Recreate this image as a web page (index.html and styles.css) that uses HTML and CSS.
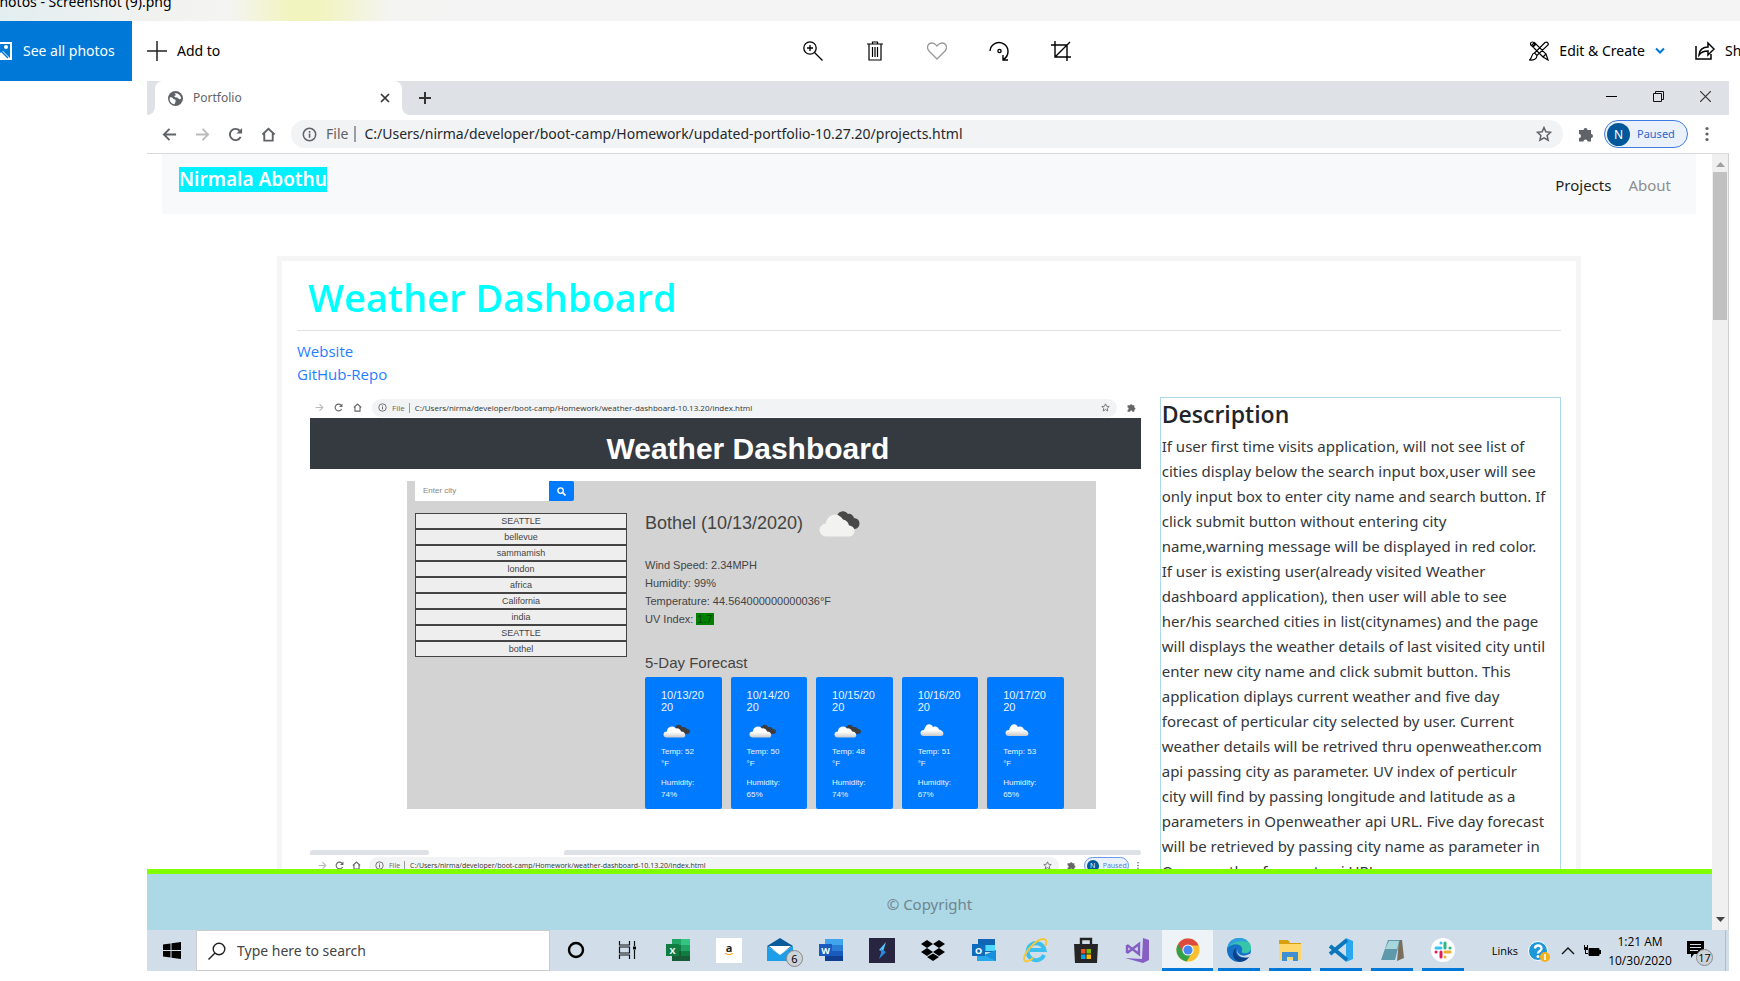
FILE: index.html
```html
<!DOCTYPE html>
<html lang="en">
<head>
<meta charset="utf-8">
<title>Photos - Screenshot (9).png</title>
<link rel="stylesheet" href="styles.css">
</head>
<body>
<svg class="defs" aria-hidden="true">
  <symbol id="i-back" viewBox="0 0 16 16"><path d="M15 8H2M8 2L2 8l6 6" fill="none" stroke="currentColor" stroke-width="2"/></symbol>
  <symbol id="i-fwd" viewBox="0 0 16 16"><path d="M1 8h13M8 2l6 6-6 6" fill="none" stroke="currentColor" stroke-width="2"/></symbol>
  <symbol id="i-reload" viewBox="0 0 16 16"><path d="M13.5 10.5A6 6 0 1 1 12.5 4" fill="none" stroke="currentColor" stroke-width="2"/><path d="M15 1v6H9z" fill="currentColor"/></symbol>
  <symbol id="i-home" viewBox="0 0 16 16"><path d="M1.5 8L8 2l6.500 6M3.500 7v7.500h9V7" fill="none" stroke="currentColor" stroke-width="2"/></symbol>
  <symbol id="i-info" viewBox="0 0 16 16"><circle cx="8" cy="8" r="6.600" fill="none" stroke="currentColor" stroke-width="1.600"/><path d="M7.200 7h1.700v4.500H7.200zM7.200 4.300h1.700V6H7.200z" fill="currentColor"/></symbol>
  <symbol id="i-star" viewBox="0 0 16 16"><path d="M8 1.500l1.900 4.300 4.700.5-3.500 3.200 1 4.700L8 11.800l-4.100 2.400 1-4.700L1.400 6.300l4.700-.5z" fill="none" stroke="currentColor" stroke-width="1.500"/></symbol>
  <symbol id="i-puzzle" viewBox="0 0 16 16"><path d="M1 4h4.500a2 2 0 1 1 4 0H13v4a2 2 0 1 1 0 4v3.500H9.500a2 2 0 0 0-4 0H1V12a2 2 0 0 0 0-4z" fill="currentColor"/></symbol>
  <symbol id="i-dots" viewBox="0 0 4 16"><circle cx="2" cy="2.500" r="1.600"/><circle cx="2" cy="8" r="1.600"/><circle cx="2" cy="13.500" r="1.600"/></symbol>
  <linearGradient id="g-cloud" x1="0" y1="0" x2="0" y2="1"><stop offset=".5" stop-color="#fff"/><stop offset="1" stop-color="#c9c9c9"/></linearGradient>
  <symbol id="i-cloud" viewBox="0 0 28 14"><path d="M4 12a3.500 3 0 0 1 0-6C6-1 11-1 13 3c3-1 5 0 6 2.500 5 1 6 6.500 2 6.500z" fill="url(#g-cloud)"/></symbol>
  <symbol id="i-clouds" viewBox="0 0 28 14"><path d="M12 4c1-4 6-4 7-1 4-.5 5 2 5 2 4 0 4 5 0 5h-8z" fill="#3d3d3f"/><path d="M4 13.500a3.500 3 0 0 1 0-6 5 5 0 0 1 9-3 4 4 0 0 1 5 3 4 3.500 0 0 1 3 6z" fill="url(#g-cloud)"/></symbol>
</svg>

<div class="titlebar"><span class="titlebar-text">Photos - Screenshot (9).png</span></div>

<header class="toolbar">
  <div class="tools-left">
    <button class="see-all"><svg class="see-icon" viewBox="0 0 20 18"><path d="M0 1h19v16H0" fill="none" stroke="#fff" stroke-width="2"/><circle cx="14" cy="5" r="2" fill="#fff"/><path d="M0 4l5 4 3 3 3-2 7 7H0z" fill="#fff"/><path d="M8 8l8 8" stroke="#0078d7" stroke-width="1.500"/></svg>See all photos</button>
    <button class="tool-text"><svg width="20" height="20" viewBox="0 0 20 20"><path d="M0 10h20M10 0v20" stroke="#222" stroke-width="1.500"/></svg>Add to</button>
  </div>
  <div class="tools-mid">
    <button class="tool" aria-label="Zoom"><svg width="20" height="20" viewBox="0 0 20 20"><g fill="none" stroke="#000" stroke-width="1.300"><circle cx="7" cy="7" r="6.200"/><path d="M11.500 11.500l8 8M7 4v6M4 7h6"/></g></svg></button>
    <button class="tool" aria-label="Delete"><svg width="20" height="20" viewBox="0 0 20 20"><path d="M2 3h16M7.500 3V1h5v2M4 3v16h12V3M7.500 6v10M10 6v10M12.500 6v10" fill="none" stroke="#000" stroke-width="1.200"/></svg></button>
    <button class="tool" aria-label="Favorite"><svg width="20" height="20" viewBox="0 0 20 20"><path d="M10 18L2 10C-1 6 1 2 5 2c3 0 4 2 5 3 1-1 2-3 5-3 4 0 6 4 3 8z" fill="none" stroke="#999" stroke-width="1.300"/></svg></button>
    <button class="tool" aria-label="Rotate"><svg width="20" height="20" viewBox="0 0 20 20"><g fill="none" stroke="#000" stroke-width="1.400"><path d="M1 10a9 9 0 1 1 13.500 8.300M14 14v5h5"/><circle cx="10.500" cy="10" r="1.600"/></g></svg></button>
    <button class="tool" aria-label="Crop"><svg width="20" height="20" viewBox="0 0 20 20"><path d="M0 4h16v16M4 0v16h16M4 16L19 1" fill="none" stroke="#000" stroke-width="1.400"/></svg></button>
  </div>
  <div class="tools-right">
    <button class="tool-text"><svg width="20" height="20" viewBox="0 0 20 20"><g fill="none" stroke="#000" stroke-width="1.200"><path d="M5.500 1.500l-3 3L14 16l5 3-2-6zM14 16l3-3M4 6l3-3M16 1.500a2 2 0 0 1 3 2.500L8 14.500 5.500 12zM5.500 12C2 12.500 3.500 17 .5 19c4 .5 7.500-1 7.500-4.500"/><circle cx="3.500" cy="3" r="2"/></g></svg>Edit &amp; Create<svg class="chev" viewBox="0 0 10 8"><path d="M1 1.500l4 4 4-4" fill="none" stroke="#0078d7" stroke-width="2"/></svg></button>
    <button class="tool-text share"><svg width="20" height="20" viewBox="0 0 20 20"><path d="M1 5v13h15v-5M4 14c0-5 4-8 9-8V2l6 6-6 6v-4c-4 0-7 1-9 4z" fill="none" stroke="#000" stroke-width="1.500"/></svg>Share</button>
  </div>
</header>

<div class="browser">
  <div class="tabstrip">
    <div class="tab-edge"></div>
    <div class="tab-slot">
      <div class="tab"><svg width="15" height="15" viewBox="0 0 16 16"><circle cx="8" cy="8" r="8" fill="#5f6368"/><path d="M2 7c3-1 3 2 5 2s1 3 0 5C3 14 1 10 2 7zM7 2c4 0 7 3 7 6-2 2-3 0-4-1-2 0-4-1-3-2 1 0 2-1 0-3z" fill="#fff"/></svg><span>Portfolio</span><button class="plain" aria-label="Close tab"><svg width="10" height="10" viewBox="0 0 10 10"><path d="M1 1l8 8M9 1L1 9" stroke="#333" stroke-width="1.700"/></svg></button></div>
    </div>
    <div class="strip-rest">
      <button class="plain" aria-label="New tab"><svg width="12" height="12" viewBox="0 0 12 12"><path d="M0 6h12M6 0v12" stroke="#333" stroke-width="2"/></svg></button>
      <div class="win-controls">
        <button class="plain" aria-label="Minimize"><svg width="11" height="11" viewBox="0 0 11 11"><path d="M0 5.500h11" stroke="#000"/></svg></button>
        <button class="plain" aria-label="Restore"><svg width="11" height="11" viewBox="0 0 11 11"><path d="M.5 2.500h8v8h-8zM2.500 2V.5h8v8H9" fill="none" stroke="#111"/></svg></button>
        <button class="plain" aria-label="Close"><svg width="11" height="11" viewBox="0 0 11 11"><path d="M0 0l11 11M11 0L0 11" stroke="#333" stroke-width="1.200"/></svg></button>
      </div>
    </div>
  </div>

  <div class="addressbar">
    <button class="plain nav-ic" aria-label="Back"><svg><use href="#i-back"/></svg></button>
    <button class="plain nav-ic dim" aria-label="Forward"><svg><use href="#i-fwd"/></svg></button>
    <button class="plain nav-ic" aria-label="Reload"><svg><use href="#i-reload"/></svg></button>
    <button class="plain nav-ic" aria-label="Home"><svg><use href="#i-home"/></svg></button>
    <div class="omnibox">
      <svg class="om-ic"><use href="#i-info"/></svg><label class="om-file" for="url">File</label>
      <input id="url" class="om-url" type="text" value="C:/Users/nirma/developer/boot-camp/Homework/updated-portfolio-10.27.20/projects.html">
      <svg class="om-star"><use href="#i-star"/></svg>
    </div>
    <svg class="puzzle"><use href="#i-puzzle"/></svg>
    <button class="paused"><span class="avatar">N</span>Paused</button>
    <svg class="dots"><use href="#i-dots"/></svg>
  </div>

  <div class="viewport">
    <div class="page">
      <div class="page-scroll">
        <nav class="navbar">
          <a class="brand" href="#">Nirmala Abothu</a>
          <div class="nav-links"><a class="active" href="#">Projects</a><a href="#">About</a></div>
        </nav>
        <main class="card">
          <h1>Weather Dashboard</h1>
          <div class="links"><a href="#">Website</a><a href="#">GitHub-Repo</a></div>
          <div class="row">
            <div class="shots">
              <div class="shot">
                <div class="mini-bar">
                  <svg class="mini-ic dim"><use href="#i-fwd"/></svg><svg class="mini-ic"><use href="#i-reload"/></svg><svg class="mini-ic"><use href="#i-home"/></svg>
                  <div class="mini-omni"><svg class="mini-ic"><use href="#i-info"/></svg><span class="mini-file">File</span><span class="mini-url">C:/Users/nirma/developer/boot-camp/Homework/weather-dashboard-10.13.20/index.html</span><svg class="mini-ic"><use href="#i-star"/></svg></div>
                  <svg class="mini-ic"><use href="#i-puzzle"/></svg>
                </div>
                <div class="wd-head">Weather Dashboard</div>
                <div class="wd-body">
                  <div class="wd-side">
                    <div class="wd-search"><input type="text" placeholder="Enter city" aria-label="Enter city"><button aria-label="Search"><svg width="9" height="9" viewBox="0 0 10 10"><circle cx="4" cy="4" r="3" fill="none" stroke="#fff" stroke-width="1.500"/><path d="M6 6l3.500 3.500" stroke="#fff" stroke-width="1.800"/></svg></button></div>
                    <ul class="wd-list"><li>SEATTLE</li><li>bellevue</li><li>sammamish</li><li>london</li><li>africa</li><li>California</li><li>india</li><li>SEATTLE</li><li>bothel</li></ul>
                  </div>
                  <div class="wd-main">
                    <div class="wd-city">Bothel (10/13/2020)<svg width="42" height="28" viewBox="0 0 42 28"><path d="M18 8a6 6 0 0 1 11-3 5 5 0 0 1 6 4 5.500 5.500 0 1 1 0 11z" fill="#484848"/><path d="M7 27.500a6.500 6.500 0 0 1 0-13 9 9 0 0 1 17-4 8 8 0 0 1 6 6 5.500 5.500 0 0 1 0 11z" fill="#f2f2f0"/></svg></div>
                    <div class="wd-facts"><div>Wind Speed: 2.34MPH</div><div>Humidity: 99%</div><div>Temperature: 44.564000000000036°F</div><div>UV Index: <span class="uv">1.7</span></div></div>
                    <div class="wd-sub">5-Day Forecast</div>
                    <div class="wd-days">
                      <div class="day"><b>10/13/20<br>20</b><svg><use href="#i-clouds"/></svg><p>Temp: 52<br>°F</p><p>Humidity:<br>74%</p></div>
                      <div class="day"><b>10/14/20<br>20</b><svg><use href="#i-clouds"/></svg><p>Temp: 50<br>°F</p><p>Humidity:<br>65%</p></div>
                      <div class="day"><b>10/15/20<br>20</b><svg><use href="#i-clouds"/></svg><p>Temp: 48<br>°F</p><p>Humidity:<br>74%</p></div>
                      <div class="day"><b>10/16/20<br>20</b><svg><use href="#i-cloud"/></svg><p>Temp: 51<br>°F</p><p>Humidity:<br>67%</p></div>
                      <div class="day"><b>10/17/20<br>20</b><svg><use href="#i-cloud"/></svg><p>Temp: 53<br>°F</p><p>Humidity:<br>65%</p></div>
                    </div>
                  </div>
                </div>
              </div>
              <div class="shot">
                <div class="mini-strip"><i></i><i></i></div>
                <div class="mini-bar second">
                  <svg class="mini-ic dim"><use href="#i-fwd"/></svg><svg class="mini-ic"><use href="#i-reload"/></svg><svg class="mini-ic"><use href="#i-home"/></svg>
                  <div class="mini-omni"><svg class="mini-ic"><use href="#i-info"/></svg><span class="mini-file">File</span><span class="mini-url">C:/Users/nirma/developer/boot-camp/Homework/weather-dashboard-10.13.20/index.html</span><svg class="mini-ic"><use href="#i-star"/></svg></div>
                  <svg class="mini-ic"><use href="#i-puzzle"/></svg>
                  <span class="mini-paused"><span class="mini-av">N</span>Paused</span>
                  <svg class="mini-dots"><use href="#i-dots"/></svg>
                </div>
              </div>
            </div>
            <section class="desc">
              <h2>Description</h2>
              <p>If user first time visits application, will not see list of<br>cities display below the search input box,user will see<br>only input box to enter city name and search button. If<br>click submit button without entering city<br>name,warning message will be displayed in red color.<br>If user is existing user(already visited Weather<br>dashboard application), then user will able to see<br>her/his searched cities in list(citynames) and the page<br>will displays the weather details of last visited city until<br>enter new city name and click submit button. This<br>application diplays current weather and five day<br>forecast of perticular city selected by user. Current<br>weather details will be retrived thru openweather.com<br>api passing city as parameter. UV index of perticulr<br>city will find by passing longitude and latitude as a<br>parameters in Openweather api URL. Five day forecast<br>will be retrieved by passing city name as parameter in<br>Openweather forecast api URL.</p>
            </section>
          </div>
        </main>
      </div>
      <footer class="footer">© Copyright</footer>
    </div>
    <div class="scrollbar">
      <svg width="9" height="5" viewBox="0 0 9 5"><path d="M0 5L4.500 0 9 5z" fill="#a0a0a0"/></svg>
      <div class="thumb"></div>
      <svg class="down" width="9" height="5" viewBox="0 0 9 5"><path d="M0 0l4.500 5L9 0z" fill="#444"/></svg>
    </div>
  </div>

  <div class="taskbar">
    <button class="start" aria-label="Start"><svg width="18" height="17" viewBox="0 0 18 17"><path d="M0 2.500L7.500 1.500V8H0zM8.500 1.300L18 0v8H8.500zM0 9h7.500v6.500L0 14.500zM8.500 9H18v8l-9.500-1.300z"/></svg></button>
    <div class="search"><svg width="18" height="18" viewBox="0 0 18 18"><circle cx="11" cy="7" r="5.800" fill="none" stroke="#222" stroke-width="1.400"/><path d="M7 11L.5 17.500" stroke="#222" stroke-width="1.400"/></svg><input type="text" placeholder="Type here to search" aria-label="Type here to search"></div>
    <div class="apps">
      <button class="app" aria-label="Cortana"><svg viewBox="0 0 26 26"><circle cx="13" cy="13" r="7" fill="none" stroke="#000" stroke-width="2.400"/></svg></button>
      <button class="app" aria-label="Task view"><svg viewBox="0 0 26 26"><path d="M5.500 4v4h10V4M5.500 22v-4h10v4M5.500 10h10v6h-10zM20.500 4v5M20.500 13v9" fill="none" stroke="#111" stroke-width="1.200"/><path d="M19 9.500h3v3h-3z"/></svg></button>
      <button class="app" aria-label="Excel"><svg viewBox="0 0 26 26"><path d="M7 2h18v6H7z" fill="#21a366"/><path d="M16 2h9v6h-9z" fill="#33c481"/><path d="M7 8h18v6H7z" fill="#107c41"/><path d="M16 8h9v6h-9z" fill="#21a366"/><path d="M7 14h18v10H7z" fill="#185c37"/><path d="M16 14h9v5h-9z" fill="#107c41"/><path d="M1 7h13v12H1z" fill="#107c41"/><text x="7.500" y="17" class="g-let">X</text></svg></button>
      <button class="app" aria-label="Amazon"><svg viewBox="0 0 26 26"><path d="M0 1h26v25H0z" fill="#fff"/><text x="13" y="15" class="g-a">a</text><path d="M9 16.500q4 2.500 8 0" fill="none" stroke="#f90"/></svg></button>
      <button class="app" aria-label="Mail, 6 unread"><svg viewBox="0 0 26 26"><path d="M0 9l13-8 13 8-13 8z" fill="#0a5a9c"/><path d="M2 9h22l-11 9z" fill="#fff"/><path d="M0 9l13 9 13-9v15H0z" fill="#1c9fe8"/></svg><span class="badge">6</span></button>
      <button class="app" aria-label="Word"><svg viewBox="0 0 26 26"><path d="M7 2h18v6H7z" fill="#41a5ee"/><path d="M7 8h18v6H7z" fill="#2b7cd3"/><path d="M7 14h18v5H7z" fill="#185abd"/><path d="M7 19h18v5H7z" fill="#103f91"/><path d="M1 7h13v12H1z" fill="#185abd"/><text x="7.500" y="17" class="g-let">W</text></svg></button>
      <button class="app" aria-label="Shortcut"><svg viewBox="0 0 26 26"><path d="M0 1h26v25H0z" fill="#282541"/><path d="M17 5l-7 8 4 2z" fill="#59c3ff"/><path d="M12 12l5 3-7 7 2-6z" fill="#2a86e8"/></svg></button>
      <button class="app" aria-label="Dropbox"><svg viewBox="0 0 26 26"><path d="M7 3l6 4-6 4-6-4zM19 3l6 4-6 4-6-4zM7 11l6 4-6 4-6-4zM19 11l6 4-6 4-6-4zM13 16.500l6 3.500-6 4-6-4z"/></svg></button>
      <button class="app" aria-label="Outlook"><svg viewBox="0 0 26 26"><path d="M7 2h17v13H7z" fill="#1066b5"/><path d="M7 8h8v6H7z" fill="#32a9e7"/><path d="M15 8h9v6h-9z" fill="#50d9ff"/><path d="M6 14l9 5 10-6v11H6z" fill="#28a8ea"/><path d="M25 13v11L13 18z" fill="#1490df"/><path d="M1 7h13v12H1z" fill="#0f6cbd"/><text x="7.500" y="17" class="g-let">O</text></svg></button>
      <button class="app" aria-label="Internet Explorer"><svg viewBox="0 0 26 26"><path d="M22 18A8.500 8.500 0 1 1 22.500 13H8" fill="none" stroke="#3cc0f0" stroke-width="4"/><path d="M3 24C-2 20 14 1 22 2c3 1 3 4 1 7M3 24c2 1 6-1 8-3" fill="none" stroke="#f5c73a" stroke-width="2"/></svg></button>
      <button class="app" aria-label="Store"><svg viewBox="0 0 26 26"><path d="M8 8V2h10v6" fill="none" stroke="#222" stroke-width="2.400"/><path d="M1 7h24l-1 19H2z" fill="#252526"/><path d="M8 12h4.500v4.500H8z" fill="#f25022"/><path d="M13.500 12H18v4.500h-4.500z" fill="#7fba00"/><path d="M8 17.500h4.500V22H8z" fill="#00a4ef"/><path d="M13.500 17.500H18V22h-4.500z" fill="#ffb900"/></svg></button>
      <button class="app" aria-label="Visual Studio"><svg viewBox="0 0 26 26"><path d="M19 1l6 2v20l-6 3-18-5 17 1z" fill="#865fc5"/><path d="M3 8v8M3 8l12 9V7L3 16" fill="none" stroke="#865fc5" stroke-width="2.400"/></svg></button>
      <button class="app run front" aria-label="Chrome"><svg viewBox="0 0 26 26"><circle cx="13" cy="13" r="11.500" fill="#fbc02d"/><path d="M13 13L3 7.200A11.500 11.500 0 0 0 11.500 24.400L17.500 15z" fill="#34a047"/><path d="M3 7.200A11.500 11.500 0 0 1 23.500 8.500H13L9 16z" fill="#dd4b3e"/><circle cx="13" cy="13" r="5.600" fill="#fff"/><circle cx="13" cy="13" r="4.600" fill="#4688f1"/></svg></button>
      <button class="app run" aria-label="Edge"><svg viewBox="0 0 26 26"><circle cx="13" cy="13" r="12" fill="#1572c8"/><path d="M1.500 11C3 3 9 1 13 1c8 0 12 5 12 10 0 4-4 6-8 5-3-1 0-2-1-5-2-5-10-5-14.500 0z" fill="#35c5a8"/><path d="M1.500 11C3 3 9 1 13 1c4 0 7 1.500 9 4C14 3 6 5 1.500 11z" fill="#2f9fe0"/><path d="M10 11c-2 6 3 12 13 9-4 6-12 6-15 1-2-4-1-8 2-10z" fill="#0c3f83"/><path d="M12 12c-2 5 4 8 9 6 3-1 4-2 4-2l-2 4c-7 2-14-2-11-8z" fill="#d1deea"/></svg></button>
      <button class="app run" aria-label="File Explorer"><svg viewBox="0 0 26 26"><path d="M2 3h9l2 3h11v7H2z" fill="#d99e0b"/><path d="M2 7h22v16H2z" fill="#ffd76b"/><path d="M5 24v-9h16v9h-5v-4h-6v4z" fill="#3f8fd2"/></svg></button>
      <button class="app run" aria-label="Visual Studio Code"><svg viewBox="0 0 26 26"><path d="M18 1l7 3v18l-7 3z" fill="#2aa7ee"/><path d="M2 9l17 14M2 17L19 3" stroke="#0a77bd" stroke-width="4"/></svg></button>
      <button class="app run" aria-label="Notepad"><svg viewBox="0 0 26 26"><path d="M20 3h3l2 18-7 3z" fill="#7a6e5c"/><path d="M9 3h12l-5 20H2z" fill="#5d99aa"/><path d="M10 4h10l-2 8H6z" fill="#a9d5dd"/></svg></button>
      <button class="app run" aria-label="Slack"><svg viewBox="0 0 26 26"><circle cx="13" cy="13" r="12" fill="#fff"/><g stroke-width="3" stroke-linecap="round"><path d="M11 6v.1M6 11h5" stroke="#36c5f0"/><path d="M15 6v5M20 11h-.1" stroke="#2eb67d"/><path d="M15 20v-.1M15 15h5" stroke="#ecb22e"/><path d="M11 20v-5M6 15h.1" stroke="#e01e5a"/></g></svg></button>
    </div>
    <div class="tray">
      <span class="links-label">Links</span>
      <svg class="help" width="22" height="24" viewBox="0 0 22 24"><circle cx="10" cy="12" r="9.500" fill="#1c98d8" stroke="#fff"/><path d="M7 9.500c0-4 6.500-4 6.500 0 0 2.500-3.500 2.500-3.500 5" fill="none" stroke="#fff" stroke-width="2.400"/><circle cx="10" cy="17.500" r="1.500" fill="#fff"/><circle cx="17" cy="18" r="5" fill="#f6b01e"/><path d="M17 15v6" stroke="#fff" stroke-width="1.600"/></svg>
      <svg class="caret" width="14" height="8" viewBox="0 0 14 8"><path d="M1 7l6-6 6 6" fill="none" stroke="#111" stroke-width="1.400"/></svg>
      <svg class="battery" width="17" height="12" viewBox="0 0 17 12"><path d="M5 3.500h10v7H5z" stroke="#000"/><path d="M15 5h2v4h-2zM0 2h4v3H0zM0 0h1v2H0zM3 0h1v2H3zM1 5h1v3h2v1H1z"/></svg>
      <div class="clock"><span>1:21 AM</span><span>10/30/2020</span></div>
      <div class="notif"><svg width="17" height="17" viewBox="0 0 17 17"><path d="M0 0h17v13H7l-3 4v-4H0z"/><path d="M3 3.500h11M3 6.500h11M3 9.500h8" stroke="#d1deea"/></svg><span class="badge">17</span></div>
      <div class="peek"></div>
    </div>
  </div>
</div>
</body>
</html>
```
FILE: styles.css
```css
* { box-sizing: border-box; }
body {
  margin: 0;
  height: 100vh;
  display: flex;
  flex-direction: column;
  overflow: hidden;
  background: #fff;
  color: #000;
  font: 14px/20px "Noto Sans", "Open Sans", sans-serif;
}
button { font: inherit; color: inherit; border: 0; background: none; padding: 0; }
input { font: inherit; color: inherit; border: 0; outline: 0; padding: 0; background: none; min-width: 0; }
a { text-decoration: none; }
svg { display: block; flex: none; }
.defs { position: absolute; width: 0; height: 0; }

.titlebar {
  flex: none;
  height: 21px;
  overflow: hidden;
  background: linear-gradient(90deg, #e3eef0 0, #f1f2f0 150px, #f4f4f2 230px, #f2f4bf 290px, #f2f4bf 320px, #f4f4f2 390px, #f4f4f4 450px);
}
.titlebar-text { display: block; margin: -8px 0 0 -9px; white-space: nowrap; }

.toolbar {
  flex: none;
  height: 60px;
  display: grid;
  grid-template-columns: 1.2fr auto 1fr;
  align-items: center;
  overflow: hidden;
}
.tools-left { display: flex; align-self: stretch; gap: 15px; }
.see-all {
  width: 132px;
  display: flex;
  align-items: center;
  gap: 11px;
  background: #0078d7;
  color: #fff;
  white-space: nowrap;
}
.see-icon { width: 20px; height: 18px; margin-left: -8px; }
.tool-text { display: flex; align-items: center; gap: 10px; white-space: nowrap; }
.tools-mid { display: flex; gap: 42px; padding-left: 1px; }
.tool { width: 20px; height: 20px; }
.tools-right { display: flex; justify-content: flex-end; gap: 30px; }
.chev { width: 10px; height: 8px; }
.share { width: 45px; overflow: hidden; }

.browser {
  flex: 1;
  min-height: 0;
  margin: 0 11px 10px 147px;
  display: flex;
  flex-direction: column;
}
.plain { display: flex; }
.tabstrip { flex: none; display: flex; height: 34px; background: #fff; }
.tab-edge { width: 8px; background: #dee1e6; border-radius: 0 0 8px 0; }
.tab-slot { display: flex; background: #dee1e6; }
.tab {
  width: 247px;
  padding: 0 12px 0 13px;
  display: flex;
  align-items: center;
  gap: 10px;
  border-radius: 8px 8px 0 0;
  background: #fff;
  color: #5f6368;
  font-size: 12px;
}
.tab button { margin-left: auto; }
.strip-rest { flex: 1; display: flex; align-items: center; justify-content: space-between; padding: 0 18px 0 17px; background: #dee1e6; border-radius: 0 0 0 8px; }
.win-controls { display: flex; gap: 36px; padding-bottom: 4px; }

.addressbar {
  flex: none;
  height: 39px;
  display: flex;
  align-items: center;
  padding: 0 20px 0 15px;
  border-bottom: 1px solid #d8dade;
  color: #5f6368;
}
.nav-ic { width: 15px; margin-right: 18px; }
.nav-ic svg { width: 15px; height: 15px; }
.dim { color: #bbb; }
.omnibox {
  flex: 1;
  height: 28px;
  margin: 0 15px 0 -3px;
  padding: 0 11px;
  display: flex;
  align-items: center;
  border-radius: 14px;
  background: #f1f3f4;
}
.om-ic { width: 15px; height: 15px; }
.om-file { margin: 0 8px 0 9px; padding-right: 6px; border-right: 2px solid #9a9da1; line-height: 16px; }
.om-url { flex: 1; font-size: 14px; color: #26282b; }
.om-star { width: 16px; height: 16px; }
.puzzle { width: 16px; height: 16px; margin-right: 10px; }
.paused {
  width: 84px;
  height: 28px;
  display: flex;
  align-items: center;
  gap: 7px;
  padding-left: 2px;
  margin-right: 17px;
  border: 1px solid #3f7be0;
  border-radius: 14px;
  background: #eaf1fb;
  color: #2b67d2;
  font-size: 11px;
}
.avatar { width: 23px; height: 23px; border-radius: 50%; background: #00589b; color: #fff; font-size: 12px; line-height: 23px; text-align: center; }
.dots { width: 4px; height: 16px; fill: #5f6368; }

.viewport { flex: 1; min-height: 0; display: flex; }
.page { flex: 1; min-width: 0; display: flex; flex-direction: column; }
.page-scroll { flex: 1; min-height: 0; overflow: hidden; }
.navbar {
  height: 60px;
  margin: 0 16px 0 15px;
  padding: 13px 25px 0 17px;
  display: flex;
  align-items: flex-start;
  justify-content: space-between;
  background: #f8f9fb;
}
.brand { background: #00f0ff; color: #fff; font-weight: 600; font-size: 19px; line-height: 25px; }
.nav-links { display: flex; gap: 17px; padding-top: 6px; font-size: 15px; line-height: 24px; }
.nav-links a { color: #8d8e90; }
.nav-links .active { color: #1d1e20; }

.card { margin: 42px 131px 0 130px; padding: 12px 15px; border: 5px solid #f5f5f5; }
.card h1 {
  margin: 0;
  padding: 0 11px 9px;
  border-bottom: 1px solid #e3e3e3;
  color: #00ffff;
  font-family: "Open Sans", "Noto Sans", sans-serif;
  font-size: 38px;
  line-height: 48px;
  font-weight: 600;
}
.links { display: flex; flex-direction: column; align-items: flex-start; padding: 9px 0 11px; font-family: "Open Sans", "Noto Sans", sans-serif; font-size: 15px; line-height: 23px; }
.links a { color: #1f80ff; }
.row { display: grid; grid-template-columns: minmax(0, 2.15fr) minmax(0, 1fr); }
.shots { padding: 0 19px 0 13px; display: flex; flex-direction: column; gap: 41px; font-family: "Liberation Sans", Arial, sans-serif; }

.mini-bar { display: flex; align-items: center; gap: 10px; height: 21px; padding: 0 5px; color: #666; font: 8px/18px "Open Sans", "Noto Sans", sans-serif; }
.mini-ic { width: 9px; height: 9px; }
.mini-omni { flex: 1; display: flex; align-items: center; height: 18px; padding: 0 7px 0 6px; border-radius: 9px; background: #f1f3f4; }
.mini-file { margin: 0 5px; padding-right: 4px; border-right: 1px solid #999; line-height: 10px; }
.mini-url { flex: 1; color: #333; white-space: nowrap; }
.mini-strip { display: flex; justify-content: space-between; height: 6px; }
.mini-strip i { height: 5px; background: #dee1e6; border-radius: 4px 4px 4px 0; }
.mini-strip i:first-child { flex: 0 0 119px; }
.mini-strip i:last-child { flex: 0 0 577px; }
.second { gap: 8px; height: 19px; padding: 0 2px 0 8px; font-size: 7px; }
.mini-paused { display: flex; align-items: center; gap: 4px; width: 45px; height: 17px; padding-left: 2px; border: 1px solid #6c9be8; border-radius: 9px; background: #eaf1fb; color: #4f80d8; }
.mini-av { width: 12px; height: 12px; border-radius: 50%; background: #00589b; color: #fff; line-height: 12px; text-align: center; }
.mini-dots { width: 2px; height: 9px; fill: #666; }

.wd-head { height: 51px; padding-left: 45px; overflow: hidden; background: #343a40; color: #fff; font-size: 30px; font-weight: 700; line-height: 62px; text-align: center; }
.wd-body { display: flex; gap: 18px; margin: 12px 45px 0 97px; padding: 0 32px 0 8px; background: #d3d3d3; color: #444; }
.wd-side { flex: 0 0 212px; }
.wd-search { display: flex; height: 20px; font-size: 8px; }
.wd-search input { width: 134px; padding: 0 8px; background: #fff; }
.wd-search input::placeholder { color: #888; }
.wd-search button { width: 25px; display: grid; place-items: center; background: #007bff; border-radius: 0 2px 2px 0; }
.wd-list { list-style: none; margin: 12px 0 0; padding: 0; border: 1px solid #444; background: #eee; font-size: 9px; line-height: 14px; text-align: center; }
.wd-list li + li { border-top: 2px solid #444; }
.wd-main { flex: 1; }
.wd-city { display: flex; align-items: center; gap: 16px; height: 28px; margin: 28px 0 19px; font-size: 18px; }
.wd-facts { font-size: 11px; line-height: 18px; }
.uv { padding: 0 1px; background: #008000; color: #104010; }
.wd-sub { margin-top: 25px; font-size: 15px; line-height: 20px; }
.wd-days { display: grid; grid-template-columns: repeat(5, 1fr); gap: 9px; margin-top: 4px; }
.day { height: 132px; padding: 12px 0 0 16px; border-radius: 2px; background: #007bff; color: #eaf3ff; font-size: 8px; line-height: 12px; white-space: nowrap; }
.day b { display: block; font-size: 11px; font-weight: 400; }
.day svg { width: 28px; height: 14px; margin: 11px 0 8px 2px; }
.day p { margin: 0 0 7px; }

.desc { border: 1px solid #add8e6; padding: 1px 0 0 1px; color: #212529; }
.desc h2 { margin: 0; font-family: "Open Sans", "Noto Sans", sans-serif; font-size: 23px; line-height: 30px; font-weight: 600; }
.desc p { margin: 5px 0 0; font-size: 15px; line-height: 25px; white-space: nowrap; color: #33373b; }

.footer { flex: none; height: 61px; border-top: 5px solid #7fff00; background: #add8e6; color: #6d868f; font-size: 15px; line-height: 60px; text-align: center; }
.scrollbar { width: 17px; display: flex; flex-direction: column; align-items: center; padding: 8px 1px; background: #f0f0f0; border-right: 1px solid #d0d0d0; }
.thumb { width: 14px; height: 148px; margin-top: 5px; background: #c1c1c1; }
.down { margin-top: auto; }

.taskbar { flex: none; height: 41px; display: flex; background: #d1deea; }
.start { width: 49px; display: grid; place-items: center; }
.search { flex: 0 1 354px; display: flex; align-items: center; gap: 11px; padding-left: 11px; background: #fff; border: 1px solid #ccc; }
.search input { flex: 1; }
.search input::placeholder { color: #444; }
.apps { display: flex; }
.app { position: relative; width: 51px; padding: 7px 4px 0; display: flex; flex-direction: column; align-items: center; }
.app svg { width: 26px; height: 26px; }
.g-let { font: 700 9px "Open Sans", sans-serif; fill: #fff; text-anchor: middle; }
.g-a { font: 700 11px "Open Sans", sans-serif; fill: #222; text-anchor: middle; }
.badge { position: absolute; right: 2px; bottom: 4px; width: 17px; height: 17px; border: 1px solid #888; border-radius: 50%; background: #ccd3d9; font-size: 11px; line-height: 15px; text-align: center; }
.run::after { content: ""; width: 42px; height: 3px; margin-top: auto; background: #0078d7; }
.front { background: #eef3f8; padding-left: 0; padding-right: 0; }
.front::after { width: 51px; }
.tray { margin-left: auto; display: flex; align-items: center; font: 11px/19px "Open Sans", "Noto Sans", sans-serif; }
.links-label { margin-right: 10px; }
.help { margin-right: 11px; }
.caret { margin-right: 9px; }
.battery { margin-right: 7px; }
.clock { display: flex; flex-direction: column; align-items: center; width: 64px; margin-right: 15px; font-size: 12px; }
.notif { position: relative; width: 26px; padding-bottom: 2px; }
.notif .badge { right: 0; bottom: -6px; }
.peek { width: 4px; margin-left: 12px; align-self: stretch; border-left: 1px solid #b4bec8; }
```
